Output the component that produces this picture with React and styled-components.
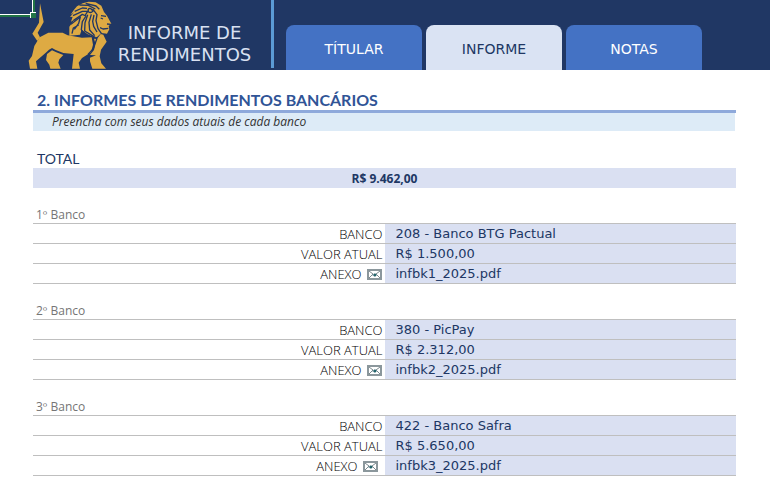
import React from "react";
import styled, { createGlobalStyle } from "styled-components";

const GlobalStyle = createGlobalStyle`
  *, *::before, *::after { box-sizing: border-box; }
  body { margin: 0; background: #fff; font-family: "DejaVu Sans", sans-serif; }
`;

const Header = styled.header`
  position: relative;
  display: flex;
  height: 70px;
  padding-left: 27px;
  background: #203764;
`;

const CellCursor = styled.svg`
  position: absolute;
  top: 0;
  left: 0;
`;

const LionMark = styled.svg`
  flex: none;
`;

const Brand = styled.div`
  flex: none;
  width: 157px;
  padding: 22px 16px 0 0;
  font: 18px/22px "DejaVu Sans", sans-serif;
  color: #d9e1f2;
  text-align: center;
  white-space: nowrap;
`;

const Divider = styled.span`
  flex: none;
  width: 3px;
  height: 68px;
  background: #5b9bd5;
`;

const Tabs = styled.nav`
  display: flex;
  align-items: flex-end;
  gap: 4px;
  margin-left: 12px;
`;

const Tab = styled.button`
  width: 136px;
  height: 45px;
  padding: 2px 0 0;
  border: 0;
  border-radius: 8px 8px 0 0;
  background: ${(p) => (p.$active ? "#dae3f3" : "#4472c4")};
  color: ${(p) => (p.$active ? "#203764" : "#fff")};
  font: 14px/20px "DejaVu Sans", sans-serif;
  cursor: pointer;
`;

const Main = styled.main`
  padding: 20px 34px 20px 33px;
`;

const Title = styled.h1`
  margin: 0;
  padding: 0 0 1px 4px;
  border-bottom: 3px solid #8ea9db;
  font: bold 16px/19px Lato, sans-serif;
  color: #305496;
`;

const Hint = styled.p`
  margin: 0 1px 0 0;
  padding-left: 19px;
  background: #ddebf7;
  font: italic 12px/18px "Open Sans", sans-serif;
  color: #333;
`;

const TotalLabel = styled.h2`
  margin: 19px 0 0;
  padding-left: 4px;
  font: 14px/18px Lato, sans-serif;
  color: #203764;
`;

const TotalValue = styled.div`
  padding-top: 1px;
  background: #dae0f2;
  font: bold 12px/19px "Open Sans", sans-serif;
  color: #203764;
  text-align: center;
`;

const BankTable = styled.table`
  width: 100%;
  margin-top: 16px;
  border-collapse: collapse;
  table-layout: fixed;
`;

const BankName = styled.caption`
  padding: 2px 0 0 3px;
  font: 12px/17px "Open Sans", sans-serif;
  color: #757575;
  text-align: left;
`;

const Row = styled.tr`
  height: 20px;
  border-top: 1px solid #bfbfbf;
  border-bottom: 1px solid #bfbfbf;
`;

const Label = styled.th`
  width: calc(50% - 1px);
  padding: 1px 2px 0 0;
  font: 300 13px/18px "Open Sans", sans-serif;
  color: #000;
  text-align: right;
`;

const Value = styled.td`
  padding: 1px 0 0 11px;
  background: #dae0f2;
  font: 13px/18px "DejaVu Sans", sans-serif;
  color: #203764;
`;

const EnvelopeIcon = styled.svg`
  margin: 0 ${(p) => p.$inset}px 0 5px;
  vertical-align: -1px;
`;

function Lion() {
  return (
    <LionMark width="87" height="70" viewBox="81 0 261 210" role="img" aria-label="Leão">
      <g fill="#deaa43">
        <path d="M120 10L131 66L113 98L120 112L112 123L97 101L117 68Z" />
        <path d="M145 98L188 98L203 106L246 113L275 112L279 134L273 157L246 174L236 188L240 206L216 206L221 162L190 159L167 150L156 144L147 149L139 157L108 184L112 206L90 206L86 182L96 168L103 138L119 112Z" />
        <path d="M156 151L169 157L190 165L178 178L175 188L182 206L151 206L148 194L138 180L141 162Z" />
        <path d="M302 102L310 104L320 125L303 149L299 169L304 190L318 206L277 206L270 184L270 173L288 166L270 165L282 150L286 130L282 116L291 117Z" />
        <path d="M212 44L222 29L231 19L248 10L266 5L287 7L304 17L312 36L321 47L334 71L326 78L328 88L321 101L304 99L291 111L284 112L262 102L245 89L240 104L208 107L208 80L225 57L213 65L218 50L210 51L222 37Z" />
      </g>
      <g fill="none" stroke="#203764" strokeWidth="4" strokeLinejoin="round">
        <path d="M224 34L247 24L261 25M219 47L247 34L263 34L256 45M221 61L247 43L258 48L247 65L244 89L252 102" />
        <path d="M213 73L241 51L236 70L223 88M216 101L220 84L236 75" />
        <path d="M238 15L265 16L286 27M257 10L288 18L298 28" />
        <path d="M277 31C270 20 261 27 266 36C273 40 281 35 279 28L291 44L288 62L294 86L304 100" />
        <path d="M263 44L255 68L254 93L272 104L286 113M274 43L267 67L269 90L284 107M282 45L278 64L281 79L291 96" />
        <path d="M303 47L318 49M302 54L309 57M321 72L333 73M325 85L309 87L300 83" />
        <path d="M291 115L280 146L264 163" />
      </g>
    </LionMark>
  );
}

function Envelope({ inset }) {
  return (
    <EnvelopeIcon $inset={inset} width="15" height="11" viewBox="0 0 15 11" aria-hidden="true">
      <rect x="1" y="1" width="13" height="9" fill="#fff" stroke="#8b979c" strokeWidth="2" />
      <path d="M2 2L6 5M13 2L9 5M2 9L6 5M13 9L9 5" fill="none" stroke="#7b898e" />
      <path d="M5 6L8 4L10 6L8 8Z" fill="#6b8f98" />
      <path d="M7 6H9" stroke="#24656b" strokeWidth="2" />
    </EnvelopeIcon>
  );
}

const tabs = ["TÍTULAR", "INFORME", "NOTAS"];

const banks = [
  { name: "1º Banco", bank: "208 - Banco BTG Pactual", amount: "R$ 1.500,00", file: "infbk1_2025.pdf", inset: 1 },
  { name: "2º Banco", bank: "380 - PicPay", amount: "R$ 2.312,00", file: "infbk2_2025.pdf", inset: 1 },
  { name: "3º Banco", bank: "422 - Banco Safra", amount: "R$ 5.650,00", file: "infbk3_2025.pdf", inset: 5 },
];

export default function App() {
  return (
    <>
      <GlobalStyle />
      <Header>
        <Lion />
        <Brand>INFORME DE<br />RENDIMENTOS</Brand>
        <Divider />
        <Tabs>
          {tabs.map((tab) => (
            <Tab key={tab} type="button" $active={tab === "INFORME"}>{tab}</Tab>
          ))}
        </Tabs>
        <CellCursor width="36" height="18" viewBox="0 0 36 18" aria-hidden="true">
          <path d="M0 14.5H31M32.5 0V12" stroke="#fff" />
          <path d="M0 16H30M34 0V12" stroke="#217346" strokeWidth="2" />
          <rect x="30" y="12" width="6" height="6" fill="#fff" />
          <rect x="31" y="13" width="5" height="5" fill="#217346" />
        </CellCursor>
      </Header>
      <Main>
        <Title>2. INFORMES DE RENDIMENTOS BANCÁRIOS</Title>
        <Hint>Preencha com seus dados atuais de cada banco</Hint>
        <TotalLabel>TOTAL</TotalLabel>
        <TotalValue>R$ 9.462,00</TotalValue>
        {banks.map((b) => (
          <BankTable key={b.name}>
            <BankName>{b.name}</BankName>
            <tbody>
              <Row><Label scope="row">BANCO</Label><Value>{b.bank}</Value></Row>
              <Row><Label scope="row">VALOR ATUAL</Label><Value>{b.amount}</Value></Row>
              <Row><Label scope="row">ANEXO<Envelope inset={b.inset} /></Label><Value>{b.file}</Value></Row>
            </tbody>
          </BankTable>
        ))}
      </Main>
    </>
  );
}
